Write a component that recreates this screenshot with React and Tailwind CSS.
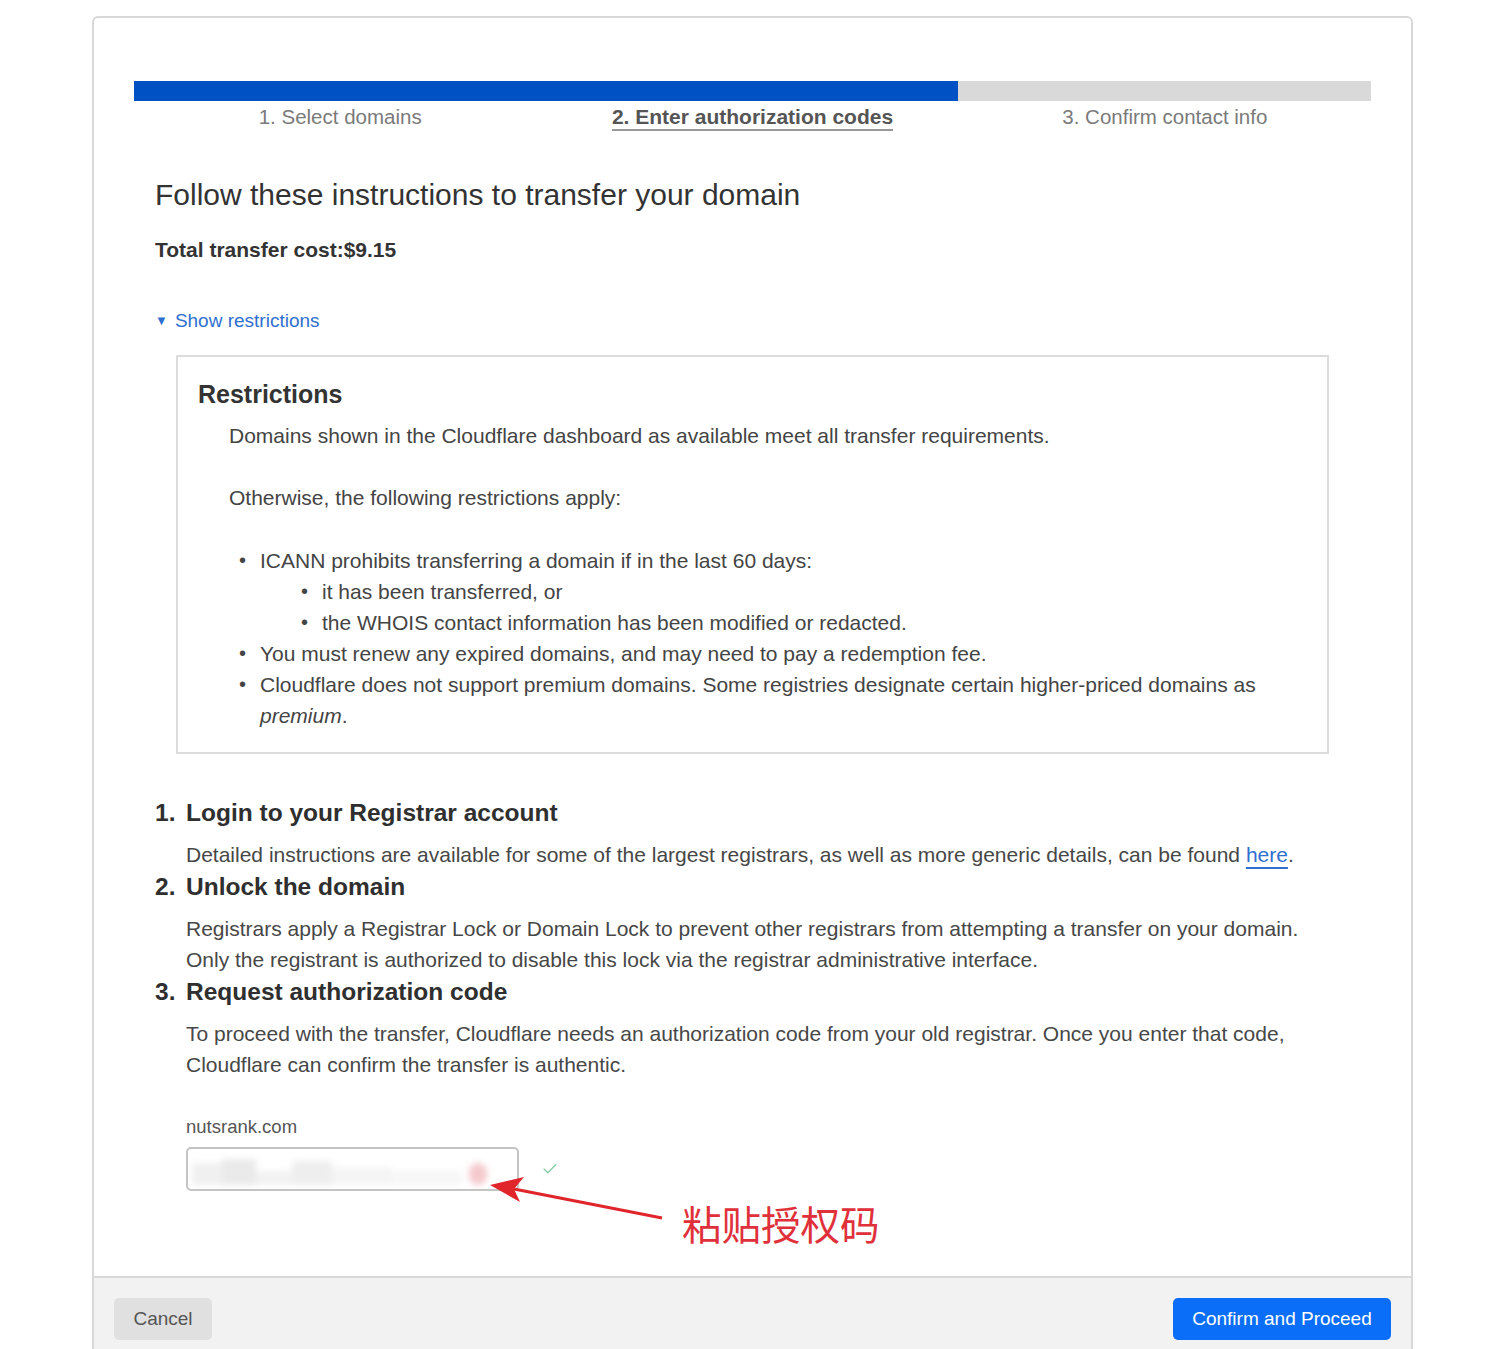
import { Check } from 'lucide-react'

const FONT = { fontFamily: '"Liberation Sans", Arial, sans-serif' }

const STEPS = [
  { label: '1. Select domains' },
  { label: '2. Enter authorization codes', active: true },
  { label: '3. Confirm contact info' },
]

function Bullet({ children, nested }) {
  return (
    <li className={'flex items-start ' + (nested ? 'pl-[72px]' : 'pl-[10px]')}>
      <span className="w-[21px] shrink-0 text-[20px] leading-[31px]">•</span>
      <span className="flex-1">{children}</span>
    </li>
  )
}

function Step({ n, title, children }) {
  return (
    <div>
      <h3 className="flex text-[24.5px] leading-[30px] font-semibold text-[#2f2f2f]">
        <span className="w-[31px]">{n}.</span>
        <span>{title}</span>
      </h3>
      <div className="pl-[31px] pr-[20px] mt-[11px] text-[21px] leading-[31px] text-[#474747]">{children}</div>
    </div>
  )
}

export default function App() {
  return (
    <div className="h-[1349px] overflow-hidden bg-white pt-[16px]" style={FONT}>
      <div className="ml-[92px] w-[1321px] h-[1400px] border-2 border-[#d8d8d8] rounded-[6px] flex flex-col">
        {/* Body */}
        <div className="px-[40px] pt-[63px] h-[1258px]">
          {/* Progress */}
          <div className="flex h-[20px]">
            <div className="w-[824px] bg-[#0051c3]" />
            <div className="flex-1 bg-[#d9d9d9]" />
          </div>
          <div className="grid grid-cols-3 mt-[4px] text-[20.5px] leading-[24px]">
            {STEPS.map((s) => (
              <div key={s.label} className="text-center">
                <span
                  className={
                    s.active
                      ? 'font-semibold text-[21px] text-[#555] underline underline-offset-[5px] decoration-[#999] decoration-2'
                      : 'text-[#7a7a7a]'
                  }
                >
                  {s.label}
                </span>
              </div>
            ))}
          </div>

          <div className="px-[21px]">
            <h1 className="mt-[49px] text-[30px] leading-[34px] text-[#333]">
              Follow these instructions to transfer your domain
            </h1>
            <p className="mt-[26px] text-[21px] leading-[24px] font-bold text-[#333]">Total transfer cost:$9.15</p>

            <button className="mt-[48px] flex items-center gap-[7px] text-[19px] leading-[22px] text-[#2f6fd0]">
              <span className="text-[13px]">▼</span>
              <span>Show restrictions</span>
            </button>

            {/* Restrictions */}
            <div className="mt-[23px] ml-[21px] mr-[21px] border-2 border-[#dcdcdc] pl-[20px] pr-[20px] pt-[22px] pb-[21px]">
              <h2 className="text-[25px] leading-[30px] font-semibold text-[#333]">Restrictions</h2>
              <div className="mt-[11px] pl-[31px] text-[21px] leading-[31px] text-[#444]">
                <p>Domains shown in the Cloudflare dashboard as available meet all transfer requirements.</p>
                <p className="mt-[31px]">Otherwise, the following restrictions apply:</p>
                <ul className="mt-[32px]">
                  <Bullet>ICANN prohibits transferring a domain if in the last 60 days:</Bullet>
                  <Bullet nested>it has been transferred, or</Bullet>
                  <Bullet nested>the WHOIS contact information has been modified or redacted.</Bullet>
                  <Bullet>You must renew any expired domains, and may need to pay a redemption fee.</Bullet>
                  <Bullet>
                    Cloudflare does not support premium domains. Some registries designate certain higher-priced domains as{' '}
                    <em>premium</em>.
                  </Bullet>
                </ul>
              </div>
            </div>

            {/* Steps */}
            <div className="mt-[44px] flex flex-col gap-[2px]">
              <Step n="1" title="Login to your Registrar account">
                Detailed instructions are available for some of the largest registrars, as well as more generic details, can be found{' '}
                <a className="text-[#2f6fd0] underline underline-offset-[5px]">here</a>.
              </Step>
              <Step n="2" title="Unlock the domain">
                Registrars apply a Registrar Lock or Domain Lock to prevent other registrars from attempting a transfer on your domain.
                Only the registrant is authorized to disable this lock via the registrar administrative interface.
              </Step>
              <Step n="3" title="Request authorization code">
                To proceed with the transfer, Cloudflare needs an authorization code from your old registrar. Once you enter that code,
                Cloudflare can confirm the transfer is authentic.
              </Step>
            </div>

            {/* Auth code input */}
            <div className="relative mt-[36px] pl-[31px]">
              <label className="block text-[18.5px] leading-[22px] text-[#555]">nutsrank.com</label>
              <div className="mt-[9px] flex items-center gap-[22px]">
                <div className="w-[333px] h-[44px] border-2 border-[#c4c4c4] rounded-[5px] flex items-center px-[4px] overflow-hidden">
                  <div className="flex items-end blur-[3px] w-full h-[32px]">
                    <div className="w-[30px] h-[22px] bg-[#f0f0f0]" />
                    <div className="w-[34px] h-[26px] bg-[#eaeaea]" />
                    <div className="w-[36px] h-[14px] bg-[#f2f2f2]" />
                    <div className="w-[40px] h-[24px] bg-[#eeeeee]" />
                    <div className="w-[60px] h-[18px] bg-[#f5f5f5]" />
                    <div className="w-[70px] h-[14px] bg-[#f7f7f7]" />
                    <div className="flex-1" />
                    <div className="w-[18px] h-[22px] bg-[#f4c9cc] rounded-full" />
                    <div className="w-[26px]" />
                  </div>
                </div>
                <Check size={18} strokeWidth={1.5} className="text-[#7cc69a]" />
              </div>

              {/* Annotation */}
              <svg className="absolute left-[335px] top-[59px]" width="180" height="50" viewBox="0 0 180 50">
                <line x1="172" y1="43" x2="24" y2="14" stroke="#e0252b" strokeWidth="3" />
                <polygon points="0,10 34,2 24,14 30,27" fill="#e0252b" />
              </svg>
              <span
                className="absolute left-[527px] top-[84px] text-[39.5px] leading-[46px] text-[#e0313a]"
                style={{ fontFamily: '"Noto Sans CJK SC", sans-serif' }}
              >
                粘贴授权码
              </span>
            </div>
          </div>
        </div>

        {/* Footer */}
        <div className="flex-1 border-t-2 border-[#d8d8d8] bg-[#f2f2f2] px-[20px] pt-[20px] flex justify-between items-start">
          <button className="h-[42px] w-[98px] rounded-[5px] bg-[#e0e0e0] text-[19px] text-[#555]">Cancel</button>
          <button className="h-[42px] w-[218px] rounded-[5px] bg-[#0b6ef9] text-[19px] text-white">Confirm and Proceed</button>
        </div>
      </div>
    </div>
  )
}
